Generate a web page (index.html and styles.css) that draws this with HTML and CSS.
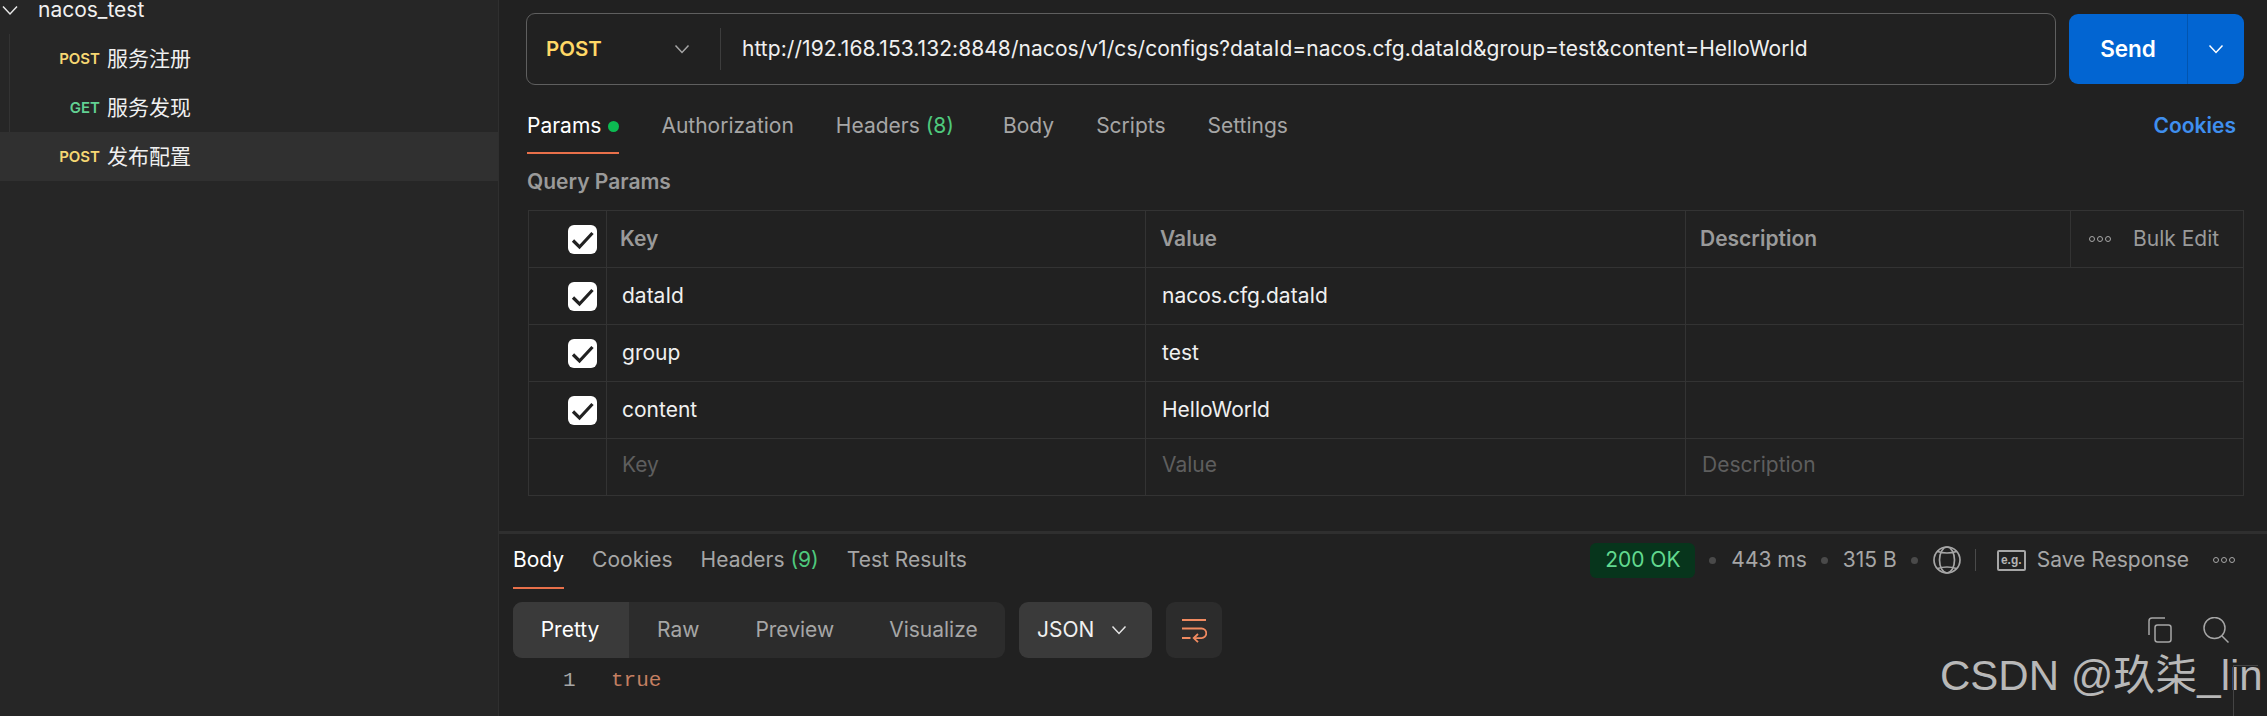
FILE: index.html
```html
<!DOCTYPE html>
<html lang="zh">
<head>
<meta charset="utf-8">
<title>nacos_test</title>
<link rel="stylesheet" href="styles.css">
</head>
<body>
<aside class="sidebar">
  <div class="tree-head">
    <svg class="tree-chevron" width="18" height="12" viewBox="0 0 18 12"><path d="M2 2.5l7 7.5 7-7.5" fill="none" stroke="#e6e6e6" stroke-width="1.5"/></svg>
    <span>nacos_test</span>
  </div>
  <div class="tree-body">
    <div class="tree-row"><span class="verb post">POST</span><span class="tree-name">服务注册</span></div>
    <div class="tree-row"><span class="verb get">GET</span><span class="tree-name">服务发现</span></div>
    <div class="tree-row active"><span class="verb post">POST</span><span class="tree-name">发布配置</span></div>
  </div>
</aside>
<main class="main">
  <section class="request">
    <div class="bar">
      <div class="url-box">
        <span class="method">POST</span>
        <svg class="method-chevron" width="16" height="10" viewBox="0 0 16 10"><path d="M1.5 1.5L8 8.5l6.5-7" fill="none" stroke="#a6a6a6" stroke-width="1.5"/></svg>
        <span class="url-divider"></span>
        <span class="url">http://192.168.153.132:8848/nacos/v1/cs/configs?dataId=nacos.cfg.dataId&amp;group=test&amp;content=HelloWorld</span>
      </div>
      <div class="send">
        <span class="send-label">Send</span>
        <span class="send-more"><svg width="16" height="10" viewBox="0 0 16 10"><path d="M1.5 1.5L8 8.5l6.5-7" fill="none" stroke="#fff" stroke-width="1.5"/></svg></span>
      </div>
    </div>
    <nav class="tabs">
      <span class="tab on">Params<i class="dot"></i></span>
      <span class="tab">Authorization</span>
      <span class="tab wide">Headers <em>(8)</em></span>
      <span class="tab">Body</span>
      <span class="tab">Scripts</span>
      <span class="tab">Settings</span>
      <span class="cookies">Cookies</span>
    </nav>
    <h2 class="query-title">Query Params</h2>
    <div class="table">
      <div class="row head">
        <div class="cell check"><span class="box"><svg width="29" height="29" viewBox="0 0 29 29"><path d="M5 15.500l6.500 6.500L24.500 8" fill="none" stroke="#212121" stroke-width="3.200"/></svg></span></div>
        <div class="cell key">Key</div>
        <div class="cell val">Value</div>
        <div class="cell desc">Description</div>
        <div class="cell bulk"><span class="ooo"><i></i><i></i><i></i></span><span>Bulk Edit</span></div>
      </div>
      <div class="row">
        <div class="cell check"><span class="box"><svg width="29" height="29" viewBox="0 0 29 29"><path d="M5 15.500l6.500 6.500L24.500 8" fill="none" stroke="#212121" stroke-width="3.200"/></svg></span></div>
        <div class="cell">dataId</div><div class="cell">nacos.cfg.dataId</div><div class="cell"></div>
      </div>
      <div class="row">
        <div class="cell check"><span class="box"><svg width="29" height="29" viewBox="0 0 29 29"><path d="M5 15.500l6.500 6.500L24.500 8" fill="none" stroke="#212121" stroke-width="3.200"/></svg></span></div>
        <div class="cell">group</div><div class="cell">test</div><div class="cell"></div>
      </div>
      <div class="row">
        <div class="cell check"><span class="box"><svg width="29" height="29" viewBox="0 0 29 29"><path d="M5 15.500l6.500 6.500L24.500 8" fill="none" stroke="#212121" stroke-width="3.200"/></svg></span></div>
        <div class="cell">content</div><div class="cell">HelloWorld</div><div class="cell"></div>
      </div>
      <div class="row ghost">
        <div class="cell check"></div>
        <div class="cell">Key</div><div class="cell">Value</div><div class="cell">Description</div>
      </div>
    </div>
  </section>
  <section class="response">
    <div class="res-top">
      <nav class="res-tabs">
        <span class="res-tab on">Body</span>
        <span class="res-tab">Cookies</span>
        <span class="res-tab">Headers <em>(9)</em></span>
        <span class="res-tab">Test Results</span>
      </nav>
      <div class="meta">
        <span class="status">200 OK</span>
        <i class="sep"></i><span>443 ms</span>
        <i class="sep"></i><span>315 B</span>
        <i class="sep"></i>
        <svg class="globe" width="28" height="28" viewBox="0 0 28 28" fill="none" stroke="#a6a6a6" stroke-width="1.700"><circle cx="14" cy="14" r="13"/><ellipse cx="14" cy="14" rx="7.500" ry="13"/><path d="M4.500 5.500Q14 8.500 23.500 5.500M4.500 22.500Q14 19.500 23.500 22.500"/></svg>
        <i class="bar-sep"></i>
        <span class="eg">e.g.</span>
        <span class="save">Save Response</span>
        <span class="ooo res-ooo"><i></i><i></i><i></i></span>
      </div>
    </div>
    <div class="res-tools">
      <div class="modes">
        <span class="mode on">Pretty</span>
        <span class="mode raw">Raw</span>
        <span class="mode preview">Preview</span>
        <span class="mode vis">Visualize</span>
      </div>
      <div class="format"><span>JSON</span><svg width="16" height="10" viewBox="0 0 16 10"><path d="M1.500 1.500L8 8.500l6.500-7" fill="none" stroke="#e6e6e6" stroke-width="1.500"/></svg></div>
      <div class="wrap"><svg width="26" height="26" viewBox="0 0 26 26" fill="none" stroke="#f08a60" stroke-width="1.800"><path d="M1 3h24M1 11.500h19.500a4.800 4.800 0 0 1 0 9.600H13M1 21h8.500"/><path d="M17 17l-4.300 4.100 4.300 4.100"/></svg></div>
      <div class="tool-icons">
        <svg width="26" height="26" viewBox="0 0 26 26" fill="none" stroke="#a6a6a6" stroke-width="1.500"><path d="M2 18V4c0-1.500 1-3 3-3h13"/><rect x="8" y="8" width="16" height="17" rx="2.500"/></svg>
        <svg width="26" height="26" viewBox="0 0 26 26" fill="none" stroke="#a6a6a6" stroke-width="1.500"><circle cx="11.500" cy="11" r="10.500"/><path d="M19 19l6.500 6.500"/></svg>
      </div>
    </div>
    <div class="code"><span class="ln">1</span><span class="val-true">true</span></div>
  </section>
</main>
<div class="watermark">CSDN @玖柒_lin</div>
<div class="crop-mark"></div>
</body>
</html>
```
FILE: styles.css
```css
* { box-sizing: border-box; }
html, body { margin: 0; height: 716px; overflow: hidden; }
body {
  display: flex;
  background: #212121;
  color: #f0f0f0;
  font: 21px/24px Inter, "Noto Sans CJK SC", sans-serif;
  position: relative;
}
.sidebar {
  width: 499px;
  flex: none;
  background: #262626;
  border-right: 1px solid #2f2f2f;
}
.tree-head {
  height: 34px;
  padding: 0 0 14px 38px;
  display: flex;
  align-items: center;
  position: relative;
}
.tree-chevron { position: absolute; left: 1px; top: 4px; }
.tree-body { margin-left: 9px; border-left: 1px solid #333; }
.tree-row {
  height: 49px;
  display: flex;
  align-items: center;
}
.tree-row.active { background: #303030; margin-left: -10px; padding-left: 10px; }
.verb {
  width: 90px;
  text-align: right;
  font-size: 15px;
  font-weight: 600;
}
.post { color: #f6d773; }
.get { color: #62d193; }
.tree-name { margin-left: 7px; }
.main { flex: 1; min-width: 0; display: flex; flex-direction: column; }
.request { height: 531px; padding: 13px 23px 0 27px; }
.bar { display: flex; gap: 13px; height: 72px; align-items: center; }
.url-box {
  flex: 1;
  height: 72px;
  display: flex;
  align-items: center;
  border: 1px solid #5f5f5f;
  border-radius: 9px;
}
.method { margin-left: 19px; width: 128px; font-weight: 600; font-size: 20.500px; color: #ffd866; }
.method-chevron { flex: none; }
.url-divider { width: 1px; height: 42px; background: #3d3d3d; margin: 0 21px 0 30px; }
.url { white-space: nowrap; letter-spacing: .05px; }
.send {
  width: 175px;
  height: 70px;
  display: flex;
  background: #0265d2;
  border-radius: 9px;
  color: #fff;
}
.send-label { width: 118px; display: flex; align-items: center; justify-content: center; font-weight: 600; font-size: 22.500px; }
.send-more { flex: 1; display: flex; align-items: center; justify-content: center; border-left: 1px solid #0255b0; }
.tabs { display: flex; gap: 42px; margin-top: 15px; height: 54px; align-items: stretch; padding-left: 1px; }
.tab { color: #a6a6a6; display: flex; align-items: center; height: 54px; padding-bottom: 2px; white-space: pre; }
.tab.on { color: #fff; border-bottom: 2px solid #e8704a; padding-bottom: 0; }
.tab.wide { margin-right: 7px; }
.tab em, .res-tab em { font-style: normal; color: #4fc97d; }
.dot { width: 11px; height: 11px; border-radius: 50%; background: #0cbb52; margin-left: 7px; }
.cookies { margin-left: auto; color: #3f8fef; font-weight: 600; align-self: center; padding-bottom: 2px; padding-right: 8px; }
.query-title { margin: 16px 0 0 1px; height: 40px; font-size: 21px; line-height: 24px; font-weight: 600; color: #9a9a9a; }
.table { border: 1px solid #333; border-bottom: 0; margin-left: 2px; }
.row {
  display: grid;
  grid-template-columns: 77px 539px 540px 1fr;
  height: 57px;
  border-bottom: 1px solid #333;
}
.row.head { grid-template-columns: 77px 539px 540px 385px 1fr; }
.cell { display: flex; align-items: center; padding: 0 0 1px 16px; border-left: 1px solid #333; min-width: 0; }
.cell:nth-child(2) { padding-left: 15px; }
.cell.check { border-left: 0; padding: 0 0 0 39px; }
.head .cell { color: #9a9a9a; font-weight: 600; padding-left: 14px; }
.head .cell.key { padding-left: 13px; }
.head .cell.check { padding-left: 39px; }
.head .bulk { font-weight: 400; padding: 0 0 1px 18px; gap: 22px; white-space: nowrap; }
.ghost .cell { color: #5e5e5e; padding-bottom: 5px; }
.box { width: 29px; height: 29px; border-radius: 6px; background: #fff; display: flex; }
.ooo { display: inline-flex; gap: 2px; }
.ooo i { width: 6px; height: 6px; border: 1.500px solid #a6a6a6; border-radius: 50%; }
.response { flex: 1; border-top: 3px solid #2f2f2f; padding: 0 32px 0 14px; }
.res-top { display: flex; justify-content: space-between; height: 55px; }
.res-tabs { display: flex; gap: 28px; }
.res-tab { color: #a6a6a6; display: flex; align-items: center; height: 55px; padding-bottom: 4px; white-space: pre; }
.res-tab.on { color: #fff; border-bottom: 2px solid #e8704a; padding-bottom: 2px; }
.meta { display: flex; align-items: center; color: #a6a6a6; height: 52px; white-space: nowrap; }
.status { background: #07351c; color: #62d98f; height: 35px; width: 105px; border-radius: 6px; display: flex; align-items: center; justify-content: center; }
.sep { width: 7px; height: 7px; border-radius: 50%; background: #4a4a4a; margin: 0 15px 0 14px; }
.globe { flex: none; }
.bar-sep { width: 1px; height: 22px; background: #4a4a4a; margin: 0 21px 0 14px; }
.eg {
  width: 29px; height: 21px;
  border: 2px solid #a6a6a6; border-radius: 2px;
  font: 700 12px/16px "Liberation Sans", sans-serif;
  text-align: center;
  color: #b4b4b4;
}
.save { margin-left: 11px; }
.res-ooo { margin-left: 24px; }
.res-tools { display: flex; gap: 14px; margin-top: 13px; height: 56px; }
.modes { width: 492px; display: flex; align-items: center; background: #2c2c2c; border-radius: 9px; overflow: hidden; color: #a6a6a6; }
.mode.on { width: 116px; padding-right: 2px; height: 100%; background: #3a3a3a; color: #fff; display: flex; align-items: center; justify-content: center; }
.mode.raw { margin-left: 28px; }
.mode.preview { margin-left: 56px; }
.mode.vis { margin-left: 55px; }
.format { width: 133px; display: flex; align-items: center; gap: 17px; padding-left: 18px; background: #3a3a3a; border-radius: 9px; color: #f0f0f0; }
.wrap { width: 56px; display: flex; align-items: center; justify-content: center; background: #2c2c2c; border-radius: 9px; }
.tool-icons { margin-left: auto; display: flex; gap: 30px; align-items: center; padding: 0 6px 0 0; }
.code { display: flex; align-items: center; height: 46px; font: 21px/24px "Liberation Mono", monospace; }
.ln { width: 98px; padding-left: 50px; color: #a6a6a6; }
.val-true { color: #c47f61; }
.watermark {
  position: absolute;
  left: 1940px;
  top: 651px;
  font: 42px/50px "Liberation Sans", "Noto Sans CJK SC", sans-serif;
  color: #b8b8b8;
  white-space: nowrap;
}
.crop-mark {
  position: absolute;
  left: 2233px;
  top: 665px;
  width: 25px;
  height: 51px;
  border-top: 1px solid #444;
  border-left: 1px solid #444;
}
```
